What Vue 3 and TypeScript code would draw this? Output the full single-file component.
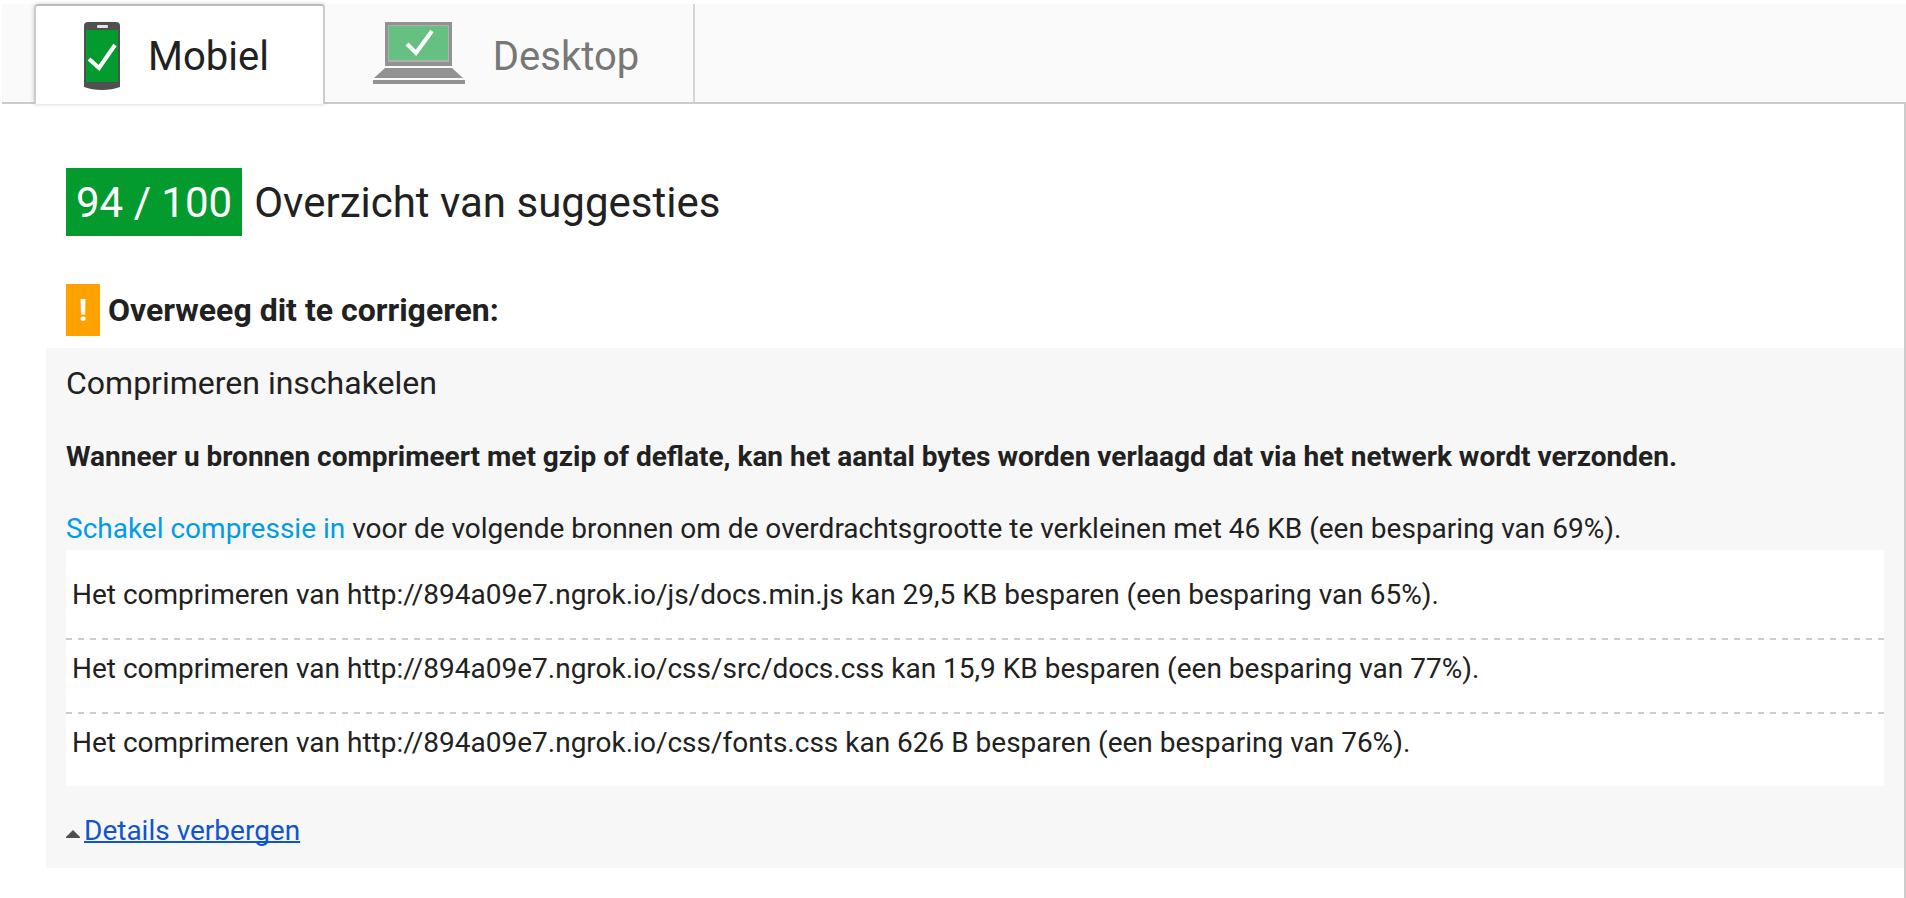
<script setup lang="ts">
import { ref } from 'vue'

interface Saving {
  url: string
  amount: string
  percent: number
}

const activeTab = ref<'mobile' | 'desktop'>('mobile')

const savings: Saving[] = [
  { url: 'http://894a09e7.ngrok.io/js/docs.min.js', amount: '29,5 KB', percent: 65 },
  { url: 'http://894a09e7.ngrok.io/css/src/docs.css', amount: '15,9 KB', percent: 77 },
  { url: 'http://894a09e7.ngrok.io/css/fonts.css', amount: '626 B', percent: 76 },
]
</script>

<template>
  <div class="page">
    <nav class="tabs" role="tablist">
      <button
        class="tab"
        :class="{ active: activeTab === 'mobile' }"
        type="button"
        role="tab"
        :aria-selected="activeTab === 'mobile'"
        @click="activeTab = 'mobile'"
      >
        <svg class="phone" width="36" height="68" viewBox="0 0 36 68" aria-hidden="true">
          <path d="M4 0H32Q36 0 36 4V65Q28 68 18 68Q8 68 0 65V4Q0 0 4 0Z" fill="#505050" />
          <rect x="2" y="8" width="32" height="52" fill="#039b2d" />
          <rect x="13" y="3" width="11" height="3" rx="1" fill="#e4e4e4" />
          <path d="M5 37L15 46L31 23" fill="none" stroke="#fff" stroke-width="4" />
        </svg>
        <span>Mobiel</span>
      </button>
      <button
        class="tab"
        :class="{ active: activeTab === 'desktop' }"
        type="button"
        role="tab"
        :aria-selected="activeTab === 'desktop'"
        @click="activeTab = 'desktop'"
      >
        <svg class="laptop" width="92" height="68" viewBox="0 0 92 68" aria-hidden="true">
          <rect x="12" y="0" width="67" height="44" fill="#929292" />
          <rect x="15" y="3" width="61" height="37" fill="#aeb0ae" />
          <rect x="16" y="4" width="59" height="34" fill="#66c081" />
          <path d="M34 22L43 31L59 9" fill="none" stroke="#fff" stroke-width="4" />
          <path d="M12 46H79L90 56H1Z" fill="#929292" />
          <rect x="0" y="58" width="92" height="4" fill="#929292" />
        </svg>
        <span>Desktop</span>
      </button>
    </nav>

    <main class="results">
      <h1 class="summary"><span class="score">94 / 100</span><span>Overzicht van suggesties</span></h1>
      <h2 class="group"><span class="warn">!</span>Overweeg dit te corrigeren:</h2>

      <section class="rule">
        <h3>Comprimeren inschakelen</h3>
        <p class="lead">
          Wanneer u bronnen comprimeert met gzip of deflate, kan het aantal bytes worden verlaagd dat
          via het netwerk wordt verzonden.
        </p>
        <p>
          <a class="help" href="#">Schakel compressie in</a> voor de volgende bronnen om de
          overdrachtsgrootte te verkleinen met 46 KB (een besparing van 69%).
        </p>
        <ul class="urls">
          <li v-for="s in savings" :key="s.url">
            Het comprimeren van {{ s.url }} kan {{ s.amount }} besparen (een besparing van
            {{ s.percent }}%).
          </li>
        </ul>
        <div class="toggle">
          <svg width="14" height="8" viewBox="0 0 14 8" aria-hidden="true">
            <path d="M7 0L14 7V8H0V7Z" fill="#505050" />
          </svg>
          <a href="#">Details verbergen</a>
        </div>
      </section>
    </main>
  </div>
</template>

<style>
body {
  background: #fff;
}
</style>

<style scoped>
.page {
  box-sizing: border-box;
  display: flex;
  flex-direction: column;
  min-height: 100vh;
  padding: 4px 0 0 2px;
  color: #212121;
  font-family: Roboto, "Liberation Sans", sans-serif;
  font-size: 28px;
  line-height: 36px;
}

.tabs {
  display: flex;
  height: 98px;
  padding-left: 32px;
  background: #fafafa;
  border-bottom: 2px solid #ccc;
}

.tab {
  box-sizing: border-box;
  display: flex;
  align-items: center;
  height: 98px;
  padding: 6px 54px 0 48px;
  border: 0 solid #d6d6d6;
  border-right-width: 2px;
  background: #fafafa;
  color: #777;
  font: inherit;
  font-size: 40px;
  line-height: 48px;
}

.tab.active {
  height: 100px;
  padding-top: 4px;
  padding-bottom: 2px;
  border-width: 2px 2px 0;
  border-color: #bbb #ccc;
  border-radius: 4px 4px 0 0;
  background: #fff;
  color: #212121;
  box-shadow: 0 0 4px rgba(0, 0, 0, 0.2);
}

.tab svg {
  flex: none;
  margin-right: 28px;
}

.tab span {
  padding-top: 2px;
}

.results {
  flex: 1;
  padding: 64px 0 30px 44px;
  border-right: 2px solid #ccc;
}

h1,
h2,
h3,
p {
  margin: 0;
}

.summary {
  display: flex;
  gap: 12px;
  margin-left: 20px;
  font-size: 42px;
  font-weight: 400;
  line-height: 66px;
}

.summary span {
  padding-top: 2px;
}

.summary .score {
  padding: 2px 10px 0;
  background: #039b2d;
  color: #fff;
}

.group {
  display: flex;
  gap: 8px;
  margin: 48px 0 12px 20px;
  font-size: 32px;
  font-weight: 700;
  line-height: 52px;
}

.warn {
  width: 34px;
  background: #ffa200;
  color: #fff;
  text-align: center;
}

.rule {
  padding: 16px 20px 19px;
  background: #f7f7f7;
}

.rule h3 {
  font-size: 32px;
  font-weight: 400;
  line-height: 38px;
}

.rule p {
  margin-top: 36px;
}

.rule .lead {
  margin-top: 37px;
  font-weight: 700;
}

.help {
  color: #039be5;
  text-decoration: none;
}

.urls {
  margin: 3px 0 27px;
  padding: 16px 0 0;
  background: #fff;
  list-style: none;
}

.urls li {
  padding: 11px 6px 25px;
}

.urls li + li {
  padding-top: 13px;
  background: repeating-linear-gradient(to right, #ccc 0 6px, transparent 6px 12px) top / 100% 2px
    no-repeat;
}

.toggle {
  display: flex;
  align-items: center;
  gap: 4px;
}

.toggle svg {
  margin-top: 6px;
}

.toggle a {
  color: #1155cc;
  text-decoration-thickness: 2px;
  text-decoration-skip-ink: none;
}
</style>
